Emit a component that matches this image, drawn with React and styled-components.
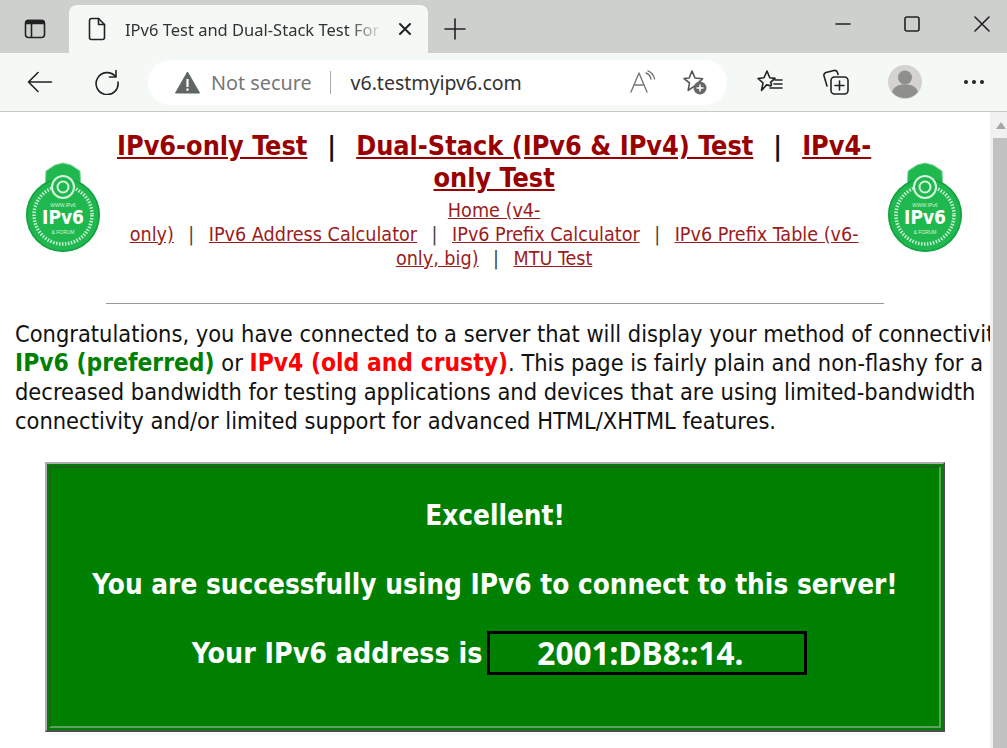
import styled, { createGlobalStyle } from 'styled-components'

const Global = createGlobalStyle`
  html, body { margin: 0; padding: 0; background: #fff; overflow: hidden; }
  body { font-family: "DejaVu Sans", sans-serif; font-stretch: condensed; }
`

const Win = styled.div`
  width: 1007px;
  height: 748px;
  display: flex;
  flex-direction: column;
  overflow: hidden;
`

const TabStrip = styled.div`
  height: 53px;
  flex: none;
  background: #cdd0cd;
  display: flex;
  align-items: flex-end;
  color: #222;
`

const StripIcon = styled.div`
  width: ${(p) => p.$w}px;
  height: 48px;
  flex: none;
  display: flex;
  align-items: center;
  justify-content: center;
`

const Tab = styled.div`
  width: 359px;
  height: 48px;
  flex: none;
  background: #f5f9f6;
  border-radius: 8px 8px 0 0;
  display: flex;
  align-items: center;
  padding: 0 16px 0 18px;
  box-sizing: border-box;
`

const TabTitle = styled.div`
  flex: 1;
  margin: 0 14px 0 18px;
  font-family: "Noto Sans", sans-serif;
  font-stretch: normal;
  font-size: 16.5px;
  white-space: nowrap;
  overflow: hidden;
  color: #333;
  -webkit-mask-image: linear-gradient(to right, #000 86%, transparent 100%);
  mask-image: linear-gradient(to right, #000 86%, transparent 100%);
`

const WinControls = styled.div`
  margin-left: auto;
  height: 48px;
  align-self: flex-start;
  display: flex;
  align-items: center;
  gap: 53px;
  padding-right: 16px;
`

const Toolbar = styled.div`
  height: 58px;
  flex: none;
  background: #f5f9f6;
  border-bottom: 1px solid #c6c8c6;
  display: flex;
  align-items: center;
  color: #222;
`

const ToolButton = styled.div`
  width: ${(p) => p.$w}px;
  height: 45px;
  flex: none;
  display: flex;
  align-items: center;
  justify-content: center;
`

const Omnibox = styled.div`
  width: 579px;
  height: 45px;
  flex: none;
  margin: 0 15px 0 14px;
  background: #fff;
  border-radius: 23px;
  display: flex;
  align-items: center;
  padding-left: 27px;
  box-sizing: border-box;
  font-family: "Noto Sans", sans-serif;
  font-stretch: normal;
`

const NotSecure = styled.span`
  margin-left: 11px;
  font-size: 19.8px;
  color: #777;
`

const Sep = styled.span`
  width: 1px;
  height: 23px;
  background: #aaa;
  margin: 0 20px 0 18px;
`

const Url = styled.span`
  font-size: 19.5px;
  color: #333;
`

const OmniIcons = styled.div`
  margin-left: auto;
  display: flex;
  align-items: center;
  gap: 24px;
  padding-right: 19px;
`

const Viewport = styled.div`
  flex: 1;
  min-height: 0;
  display: flex;
`

const Page = styled.div`
  flex: 1;
  min-width: 0;
  overflow: hidden;
  padding-left: 15px;
`

const HeaderRow = styled.div`
  width: 976px;
  display: flex;
  align-items: flex-start;
  margin-top: 18px;
`

const Logo = styled.svg`
  flex: none;
  width: 76px;
  height: 92px;
  margin: 32px ${(p) => p.$mr}px 0 ${(p) => p.$ml}px;
`

const HeaderText = styled.div`
  flex: 1;
  text-align: center;
  white-space: nowrap;
`

const BigLinks = styled.div`
  font-size: 26.8px;
  line-height: 32px;
  font-weight: 700;
  color: #111;
`

const BigLink = styled.a`
  color: #990000;
  text-decoration: underline;
`

const BarSep = styled.span`
  margin: 0 20px;
`

const SmallLinks = styled.div`
  font-size: 19.6px;
  line-height: 24px;
  margin-top: 5px;
  color: #444;
`

const SmallLink = styled.a`
  color: #9b1c1c;
  text-decoration: underline;
`

const SmallSep = styled.span`
  margin: 0 14.5px;
`

const Rule = styled.hr`
  width: 778px;
  height: 1px;
  border: 0;
  background: #999;
  margin: 32px 0 0 91px;
`

const Intro = styled.p`
  margin: 16px 0 0;
  font-size: 23.4px;
  line-height: 29px;
  color: #111;
  white-space: nowrap;
`

const Good = styled.strong`
  font-size: 24.4px;
  line-height: 1;
  color: #008000;
`

const Bad = styled.strong`
  font-size: 24.4px;
  line-height: 1;
  color: #ff0000;
`

const ResultBox = styled.div`
  width: 900px;
  height: 270px;
  box-sizing: border-box;
  margin: 26px 0 0 30px;
  padding: 2px;
  background: #008000;
  border: 2px solid;
  border-color: #adadad #4d4d4d #4d4d4d #adadad;
`

const ResultInner = styled.div`
  height: 100%;
  box-sizing: border-box;
  border: 2px solid;
  border-color: #1f5f1f #5f9f5f #5f9f5f #1f5f1f;
  display: flex;
  flex-direction: column;
  align-items: center;
  gap: 32px;
  padding-top: 29px;
  color: #fff;
  font-size: 27.7px;
  line-height: 37px;
  font-weight: 700;
`

const AddressRow = styled.div`
  height: 37px;
  display: flex;
  align-items: center;
  gap: 5px;
  padding-left: 9px;
  font-size: 28.3px;
`

const AddressField = styled.div`
  width: 320px;
  height: 44px;
  flex: none;
  margin-bottom: 2px;
  box-sizing: border-box;
  border: 3px solid #000;
  padding-left: 47px;
  display: flex;
  align-items: center;
  font-family: "Noto Sans", sans-serif;
  font-stretch: normal;
  font-size: 31.6px;
  font-weight: 700;
`

const Scrollbar = styled.div`
  width: 17px;
  flex: none;
  box-sizing: border-box;
  padding-left: 3px;
  background: #f1f1f1;
  display: flex;
  flex-direction: column;
`

const ScrollArrow = styled.div`
  height: 26px;
  flex: none;
  display: flex;
  align-items: center;
  justify-content: flex-end;
  padding-right: 1px;
`

const ScrollThumb = styled.div`
  flex: 1;
  background: #c1c1c1;
`

const Line = (props) => (
  <svg fill="none" stroke="currentColor" strokeWidth="1.6" strokeLinecap="round" strokeLinejoin="round" {...props} />
)

const Badge = ({ ml, mr }) => (
  <Logo viewBox="0 0 76 92" $ml={ml} $mr={mr}>
    <path d="M20 28 L21 9 L30 3 L38 1 L46 3 L55 9 L56 28 Z" fill="#1fb84f" stroke="#7fd69a" strokeWidth="1" />
    <circle cx="38" cy="53" r="37" fill="#1fb84f" />
    <circle cx="38" cy="53" r="36" fill="none" stroke="#17a045" strokeWidth="1.500" />
    <circle cx="38" cy="53" r="29" fill="none" stroke="#c9f0d4" strokeWidth="3.500" strokeDasharray="1.500 1.500" />
    <circle cx="38" cy="25" r="11" fill="#1fb84f" stroke="#d6f3de" strokeWidth="2" />
    <circle cx="38" cy="25" r="5.500" fill="none" stroke="#d6f3de" strokeWidth="2" />
    <text x="38" y="45" textAnchor="middle" fontSize="5" fill="#d6f3de" fontFamily="Liberation Sans">WWW.IPv6</text>
    <text x="38" y="62" textAnchor="middle" fontSize="19" fontWeight="700" fill="#fff" fontFamily="DejaVu Sans">IPv6</text>
    <text x="38" y="72" textAnchor="middle" fontSize="5" fill="#d6f3de" fontFamily="Liberation Sans">&amp; FORUM</text>
  </Logo>
)

export default function App() {
  return (
    <Win>
      <Global />
      <TabStrip>
        <StripIcon $w={69}>
          <Line width="22" height="22" viewBox="0 0 22 22">
            <rect x="1.500" y="2.500" width="19" height="17" rx="3" />
            <path d="M2 5.500h18V3.500l-1-1H3l-1 1z" fill="currentColor" />
            <path d="M7.500 6v13" />
          </Line>
        </StripIcon>
        <Tab>
          <Line width="20" height="24" viewBox="0 0 20 24">
            <path d="M2.500 3.500a2 2 0 0 1 2-2h7L17.500 7.500v13a2 2 0 0 1-2 2h-11a2 2 0 0 1-2-2z" />
            <path d="M11.500 1.500v6h6" />
          </Line>
          <TabTitle>IPv6 Test and Dual-Stack Test For Network Connectivity</TabTitle>
          <Line width="14" height="14" viewBox="0 0 14 14" strokeWidth="2">
            <path d="M2 2l10 10M12 2L2 12" />
          </Line>
        </Tab>
        <StripIcon $w={54}>
          <Line width="24" height="24" viewBox="0 0 24 24">
            <path d="M12 2v20M2 12h20" />
          </Line>
        </StripIcon>
        <WinControls>
          <Line width="16" height="16" viewBox="0 0 16 16"><path d="M1 8h14" /></Line>
          <Line width="16" height="16" viewBox="0 0 16 16"><rect x="1" y="1" width="14" height="14" rx="2" /></Line>
          <Line width="18" height="18" viewBox="0 0 18 18"><path d="M2 2l14 14M16 2L2 16" /></Line>
        </WinControls>
      </TabStrip>
      <Toolbar>
        <ToolButton $w={80}>
          <Line width="26" height="22" viewBox="0 0 26 22">
            <path d="M1.500 11h23M11 1.500L1.500 11l9.500 9.500" />
          </Line>
        </ToolButton>
        <ToolButton $w={54}>
          <Line width="26" height="26" viewBox="0 0 26 26">
            <path d="M21.500 7.500A11 11 0 1 0 24 13" />
            <path d="M22 1.500v6.500h-6.500" />
          </Line>
        </ToolButton>
        <Omnibox>
          <svg width="25" height="23" viewBox="0 0 25 23">
            <path d="M12.500 1L24.500 22H.5z" fill="#5f6664" stroke="#5f6664" strokeLinejoin="round" />
            <path d="M11.400 8h2.200v8h-2.200zM11.400 17.500h2.200v2.200h-2.200z" fill="#fff" />
          </svg>
          <NotSecure>Not secure</NotSecure>
          <Sep />
          <Url>v6.testmyipv6.com</Url>
          <OmniIcons>
            <Line width="27" height="24" viewBox="0 0 27 24" color="#777" strokeWidth="1.400">
              <path d="M2 22L10 3l8 19M5 15h10" />
              <path d="M17 3a8 8 0 0 1 5 6M19 0.800a11 11 0 0 1 6.500 8" />
            </Line>
            <svg width="28" height="26" viewBox="0 0 28 26" fill="none">
              <path d="M12 2l3 7 7.500.8-5.500 5 1 3-4-.5-5.800 4 1.300-7.500L4 9.500 9.200 9z" stroke="#555" strokeWidth="1.600" strokeLinejoin="round" />
              <circle cx="20" cy="19" r="6.500" fill="#666" />
              <path d="M20 15.500v7M16.500 19h7" stroke="#fff" strokeWidth="1.500" />
            </svg>
          </OmniIcons>
        </Omnibox>
        <ToolButton $w={56}>
          <Line width="28" height="26" viewBox="0 0 28 26">
            <path d="M11 2l2.800 6.800 5.200.6-4.500 4 1 1.500-.5 2-4.500-1-5 5.500 1.500-7.500L2 9.500 8 8.800z" />
            <path d="M19 11h7M18 15h8M14 19h12" />
          </Line>
        </ToolButton>
        <ToolButton $w={75}>
          <Line width="28" height="28" viewBox="0 0 28 28">
            <path d="M5 18l-3-10a3 3 0 0 1 2-3.500l8-2a3 3 0 0 1 3.500 2l.5 2" />
            <rect x="9" y="9" width="17" height="17" rx="3.500" />
            <path d="M17.500 13v9M13 17.500h9" />
          </Line>
        </ToolButton>
        <ToolButton $w={63}>
          <svg width="34" height="34" viewBox="0 0 34 34">
            <circle cx="17" cy="17" r="17" fill="#d4d3cf" />
            <circle cx="17" cy="12.500" r="7" fill="#8f8f8b" />
            <path d="M4 27c2-6 7-7.500 13-7.500s11 1.500 13 7.500a17 17 0 0 1-26 0z" fill="#8f8f8b" />
          </svg>
        </ToolButton>
        <ToolButton $w={75}>
          <svg width="22" height="6" viewBox="0 0 22 6" fill="#222">
            <circle cx="3" cy="3" r="2" />
            <circle cx="11" cy="3" r="2" />
            <circle cx="19" cy="3" r="2" />
          </svg>
        </ToolButton>
      </Toolbar>
      <Viewport>
        <Page>
          <HeaderRow>
            <Badge ml={10} mr={16} />
            <HeaderText>
              <BigLinks>
                <BigLink>IPv6-only Test</BigLink>
                <BarSep>|</BarSep>
                <BigLink>Dual-Stack (IPv6 &amp; IPv4) Test</BigLink>
                <BarSep>|</BarSep>
                <BigLink>IPv4-<br />only Test</BigLink>
              </BigLinks>
              <SmallLinks>
                <SmallLink>Home (v4-<br />only)</SmallLink>
                <SmallSep>|</SmallSep>
                <SmallLink>IPv6 Address Calculator</SmallLink>
                <SmallSep>|</SmallSep>
                <SmallLink>IPv6 Prefix Calculator</SmallLink>
                <SmallSep>|</SmallSep>
                <SmallLink>IPv6 Prefix Table (v6-<br />only, big)</SmallLink>
                <SmallSep>|</SmallSep>
                <SmallLink>MTU Test</SmallLink>
              </SmallLinks>
            </HeaderText>
            <Badge ml={16} mr={28} />
          </HeaderRow>
          <Rule />
          <Intro>
            Congratulations, you have connected to a server that will display your method of connectivity,
            <br />
            <Good>IPv6 (preferred)</Good> or <Bad>IPv4 (old and crusty)</Bad>. This page is fairly plain and non-flashy for a
            <br />
            decreased bandwidth for testing applications and devices that are using limited-bandwidth
            <br />
            connectivity and/or limited support for advanced HTML/XHTML features.
          </Intro>
          <ResultBox>
            <ResultInner>
              <div>Excellent!</div>
              <div>You are successfully using IPv6 to connect to this server!</div>
              <AddressRow>
                Your IPv6 address is
                <AddressField>2001:DB8::14.</AddressField>
              </AddressRow>
            </ResultInner>
          </ResultBox>
        </Page>
        <Scrollbar>
          <ScrollArrow>
            <svg width="10" height="7" viewBox="0 0 10 7"><path d="M5 0l5 7H0z" fill="#a6a6a6" /></svg>
          </ScrollArrow>
          <ScrollThumb />
        </Scrollbar>
      </Viewport>
    </Win>
  )
}
